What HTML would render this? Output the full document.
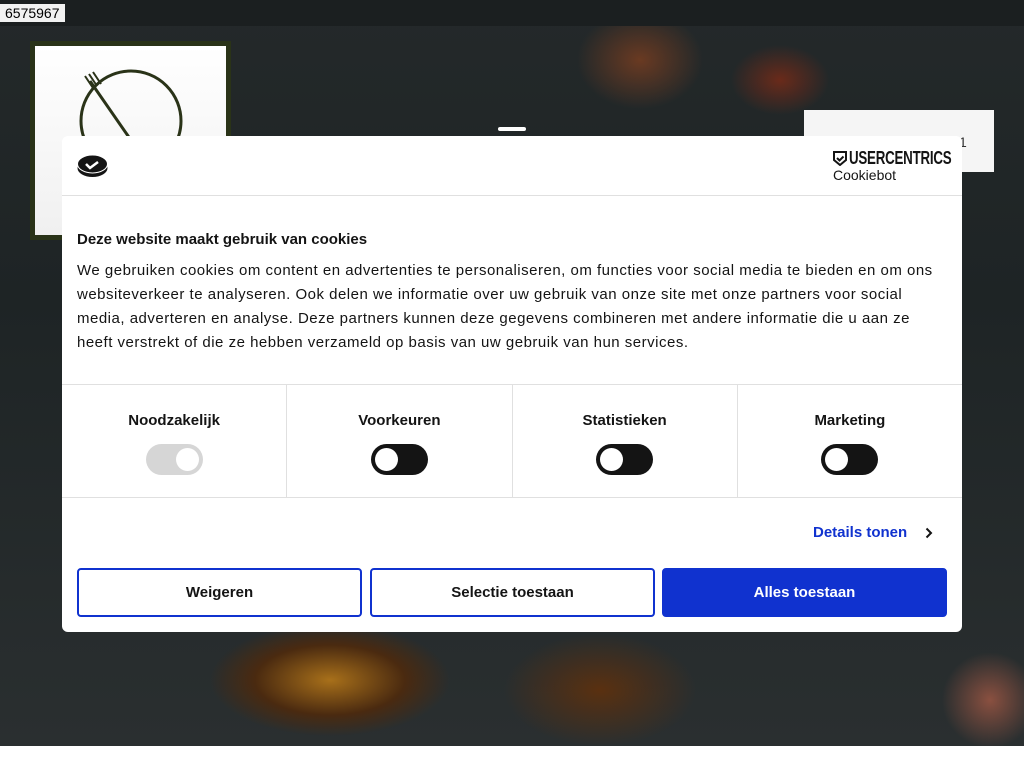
<!DOCTYPE html>
<html><head><meta charset="utf-8"><style>
*{box-sizing:border-box;margin:0;padding:0}
body{width:1024px;height:768px;overflow:hidden;position:relative;font-family:"Liberation Sans",sans-serif;background:#fff}
.bg{position:absolute;left:0;top:0;width:1024px;height:746px;background:
radial-gradient(ellipse 90px 70px at 640px 60px,#6a3a22 0%,transparent 70%),
radial-gradient(ellipse 70px 50px at 780px 80px,#6a2a1a 0%,transparent 70%),
radial-gradient(ellipse 150px 70px at 330px 680px,#a8701a 0%,#4a2a10 50%,transparent 80%),
radial-gradient(ellipse 120px 70px at 600px 690px,#5a3010 0%,transparent 80%),
radial-gradient(ellipse 60px 60px at 990px 700px,#8a5040 0%,transparent 80%),
linear-gradient(#24292a,#1e2425 40%,#2a2f30)}
.top{position:absolute;left:0;top:0;width:1024px;height:26px;background:#1b1f20}
.id{position:absolute;left:0;top:4px;background:#f2f2f2;font-size:14px;color:#000;padding:0 5px;height:18px;line-height:18px}
.logo{position:absolute;left:30px;top:41px;width:201px;height:199px;background:#2a3318;padding:5px}
.logo div{width:100%;height:100%;background:linear-gradient(#fff,#f0f0f0)}
.box{position:absolute;left:804px;top:110px;width:190px;height:62px;background:#f5f5f5}
.dlg{position:absolute;left:62px;top:136px;width:900px;height:496px;background:#fff;border-radius:6px;color:#141414}
.hd{height:60px;border-bottom:1px solid #e0e0e0;position:relative}
h2{position:absolute;left:15px;top:95px;font-size:15px;font-weight:bold}
.txt{position:absolute;left:15px;top:123px;width:860px;font-size:15px;line-height:24px;letter-spacing:0.5px}
.cats{position:absolute;left:0;top:248px;width:900px;height:114px;border-top:1px solid #e0e0e0;border-bottom:1px solid #e0e0e0;display:flex}
.cat{flex:1;border-right:1px solid #e0e0e0;text-align:center;padding-top:27px;font-weight:bold;font-size:15px}
.cat:last-child{border:none}
.tg{width:57px;height:31px;border-radius:16px;background:#141414;margin:15px auto 0;position:relative}
.tg:after{content:"";position:absolute;left:4px;top:4px;width:23px;height:23px;border-radius:50%;background:#fff}
.tg.d{background:#d6d6d6}.tg.d:after{left:30px}
.det{position:absolute;left:751px;top:388px;color:#1032cf;font-weight:bold;font-size:15px;white-space:nowrap}
.btn{position:absolute;top:432px;width:285px;height:49px;border:2px solid #1032cf;border-radius:4px;text-align:center;line-height:45px;font-weight:bold;font-size:15px;color:#141414;background:#fff}
</style></head><body>
<div class="bg"></div><div class="top"></div><div class="id">6575967</div>
<div class="logo"><div><svg width="191" height="189"><circle cx="96" cy="75" r="50" fill="none" stroke="#2a3318" stroke-width="3"/><path d="M55 35 L100 100 L105 120" stroke="#2a3318" stroke-width="3" fill="none"/><path d="M50 30 l8 12 M54 28 l8 12 M58 26 l8 12" stroke="#2a3318" stroke-width="2"/></svg></div></div>
<div class="box"><span style="position:absolute;left:155px;top:24px;font-size:14px;color:#333">1</span></div>
<div style="position:absolute;left:498px;top:127px;width:28px;height:4px;background:#fff;border-radius:2px"></div>
<div class="dlg">
<div class="hd">
<svg style="position:absolute;left:15px;top:17px" width="31" height="25"><ellipse cx="15.5" cy="15" rx="15" ry="9" fill="#141414"/><ellipse cx="15.5" cy="11" rx="15" ry="9" fill="#141414" stroke="#fff" stroke-width="1"/><path d="M9 11 l4 4 l8-6" stroke="#fff" stroke-width="2.5" fill="none"/></svg>
<svg style="position:absolute;left:771px;top:15px" width="14" height="15"><path d="M1 1 H13 V9 L7 14 L1 9 Z" fill="none" stroke="#141414" stroke-width="2"/><path d="M4 7 l2.5 2.5 l4-4" stroke="#141414" stroke-width="2" fill="none"/></svg>
<div style="position:absolute;left:787px;top:12px;font-weight:bold;font-size:18px;white-space:nowrap;transform:scaleX(.74);transform-origin:left;letter-spacing:-0.3px">USERCENTRICS</div>
<div style="position:absolute;left:771px;top:31px;font-size:14px">Cookiebot</div>
</div>
<h2>Deze website maakt gebruik van cookies</h2>
<div class="txt">We gebruiken cookies om content en advertenties te personaliseren, om functies voor social media te bieden en om ons websiteverkeer te analyseren. Ook delen we informatie over uw gebruik van onze site met onze partners voor social media, adverteren en analyse. Deze partners kunnen deze gegevens combineren met andere informatie die u aan ze heeft verstrekt of die ze hebben verzameld op basis van uw gebruik van hun services.</div>
<div class="cats">
<div class="cat">Noodzakelijk<div class="tg d"></div></div>
<div class="cat">Voorkeuren<div class="tg"></div></div>
<div class="cat">Statistieken<div class="tg"></div></div>
<div class="cat">Marketing<div class="tg"></div></div>
</div>
<div class="det">Details tonen</div>
<svg style="position:absolute;left:863px;top:391px" width="8" height="12"><path d="M1.5 1.5 L6 6 L1.5 10.5" stroke="#141414" stroke-width="2" fill="none"/></svg>
<div class="btn" style="left:15px">Weigeren</div>
<div class="btn" style="left:308px">Selectie toestaan</div>
<div class="btn" style="left:600px;background:#1032cf;color:#fff">Alles toestaan</div>
</div>
</body></html>
